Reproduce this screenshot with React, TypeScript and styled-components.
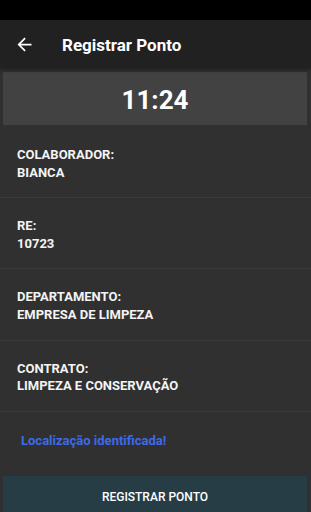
import React from "react";
import styled, { createGlobalStyle } from "styled-components";

const Global = createGlobalStyle`
  html, body { margin: 0; padding: 0; background: #303030; }
  body { font-family: Roboto, "Noto Sans", Arial, sans-serif; overflow: hidden; }
  * { box-sizing: border-box; }
`;

const Screen = styled.div`
  display: flex;
  flex-direction: column;
  width: 311px;
  height: 512px;
  background: #303030;
  overflow: hidden;
`;

const StatusBar = styled.div`
  height: 20px;
  background: #000;
  flex-shrink: 0;
`;

const AppBar = styled.header`
  height: 48px;
  background: #212121;
  display: flex;
  align-items: center;
  flex-shrink: 0;
  box-shadow: 0 2px 4px rgba(0, 0, 0, 0.35);
  position: relative;
  z-index: 1;
`;

const BackButton = styled.button`
  width: 48px;
  height: 48px;
  border: none;
  background: transparent;
  padding: 0;
  display: flex;
  align-items: center;
  justify-content: center;
  color: #fff;
  margin-right: 14px;
`;

const Title = styled.h1`
  margin: 0;
  padding-top: 2px;
  font-size: 17px;
  font-weight: 700;
  color: #fff;
  letter-spacing: 0;
`;

const ClockBox = styled.div`
  margin: 4px 4px 2px 3px;
  height: 53px;
  padding-top: 3px;
  background: #424242;
  display: flex;
  align-items: center;
  justify-content: center;
  color: #fff;
  font-size: 26px;
  font-weight: 700;
  flex-shrink: 0;
`;

const InfoRow = styled.div`
  padding: 19px 17px 16px;
  border-bottom: 1px solid #3b3b3b;
  font-size: 13px;
  line-height: 17.6px;
  font-weight: 700;
  color: #f4f4f4;
  text-transform: uppercase;
`;

const Line = styled.div``;

const Status = styled.div`
  padding: 21px 21px 0;
  height: 64px;
  color: #3d6ae8;
  font-size: 13px;
  font-weight: 700;
  flex-shrink: 0;
`;

const SubmitButton = styled.button`
  margin: 0 4px 0 3px;
  height: 42px;
  border: none;
  background: #273d46;
  color: #fff;
  font-family: Roboto, "Noto Sans", Arial, sans-serif;
  font-size: 12px;
  font-weight: 500;
  text-transform: uppercase;
  flex-shrink: 0;
`;

const rows = [
  ["COLABORADOR:", "BIANCA"],
  ["RE:", "10723"],
  ["DEPARTAMENTO:", "EMPRESA DE LIMPEZA"],
  ["CONTRATO:", "LIMPEZA E CONSERVAÇÃO"],
];

export default function App() {
  return (
    <>
      <Global />
      <Screen>
        <StatusBar />
        <AppBar>
          <BackButton aria-label="Voltar">
            <svg width="21" height="21" viewBox="0 0 24 24" fill="currentColor">
              <path d="M20 11H7.83l5.59-5.59L12 4l-8 8 8 8 1.41-1.41L7.83 13H20v-2z" />
            </svg>
          </BackButton>
          <Title>Registrar Ponto</Title>
        </AppBar>
        <ClockBox>11:24</ClockBox>
        {rows.map(([label, value]) => (
          <InfoRow key={label}>
            <Line>{label}</Line>
            <Line>{value}</Line>
          </InfoRow>
        ))}
        <Status>Localização identificada!</Status>
        <SubmitButton>Registrar Ponto</SubmitButton>
      </Screen>
    </>
  );
}
